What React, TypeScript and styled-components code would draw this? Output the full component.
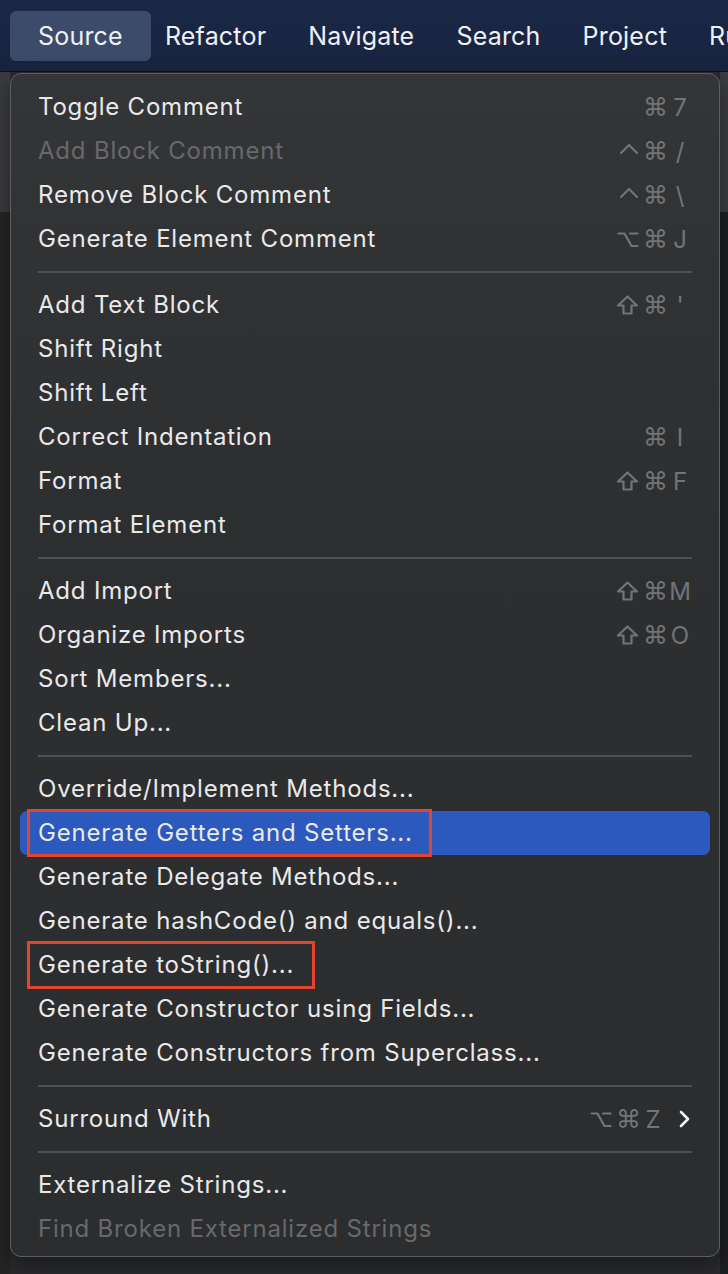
import { createGlobalStyle, styled } from "styled-components";

const GlobalStyle = createGlobalStyle`
  html, body {
    margin: 0;
    padding: 0;
    background: #1f2023;
  }
  body {
    font-family: Inter, "Noto Sans", sans-serif;
    -webkit-font-smoothing: antialiased;
  }
`;

const Page = styled.div`
  width: 728px;
  height: 1274px;
  display: flex;
  flex-direction: column;
  overflow: hidden;
`;

const MenuBar = styled.div`
  height: 72px;
  flex: none;
  display: flex;
  align-items: center;
  padding-left: 17px;
  background: linear-gradient(#1a2746, #19243f);
  border-bottom: 1px solid #0d1322;
  box-sizing: border-box;
  white-space: nowrap;
  overflow: hidden;
`;

const MenuTitle = styled.div<{ $active?: boolean }>`
  height: 50px;
  display: flex;
  align-items: center;
  padding: 0 ${(p) => (p.$active ? "28px" : "21px")};
  margin: 0 ${(p) => (p.$active ? "-7px" : "0")};
  border-radius: 6px;
  background: ${(p) => (p.$active ? "#3c4b69" : "transparent")};
  color: #eef1f6;
  font-size: 25px;
  letter-spacing: 0.2px;
`;

const Workspace = styled.div`
  flex: 1;
  position: relative;
  display: grid;
  grid-template-columns: 10px 1fr 8px;
`;

const SideStrip = styled.div<{ $top: string; $bottom: string; $split: number }>`
  background: linear-gradient(
    ${(p) => p.$top} 0,
    ${(p) => p.$top} ${(p) => p.$split}px,
    ${(p) => p.$bottom} ${(p) => p.$split}px
  );
`;

const Middle = styled.div`
  background: #2a2b2d;
`;

const Dropdown = styled.div`
  position: absolute;
  left: 10px;
  top: 1px;
  width: 710px;
  box-sizing: border-box;
  padding: 11px 0 5px;
  border: 1px solid #5c5e61;
  border-radius: 11px;
  background: linear-gradient(#343537, #2d2e30 40%, #2c2d2f);
  box-shadow: 0 8px 24px rgba(0, 0, 0, 0.45);
`;

const Row = styled.div<{ $selected?: boolean; $disabled?: boolean }>`
  height: 44px;
  margin: 0 9px;
  padding: 0 18px;
  display: flex;
  align-items: center;
  border-radius: 7px;
  background: ${(p) => (p.$selected ? "#2c59bd" : "transparent")};
  color: ${(p) => (p.$disabled ? "#67696c" : "#e9e9ea")};
  font-size: 24px;
  letter-spacing: 0.8px;
`;

const Label = styled.span<{ $boxed?: number }>`
  flex: 1;
  display: flex;
  align-items: center;
  height: 44px;
  white-space: nowrap;

  & > span {
    position: relative;
    line-height: 44px;
  }

  & > span::after {
    content: "";
    display: ${(p) => (p.$boxed ? "block" : "none")};
    position: absolute;
    left: -11px;
    right: -${(p) => p.$boxed ?? 0}px;
    top: -2px;
    bottom: -2px;
    border: 3px solid #e3452c;
  }
`;

const Shortcut = styled.span`
  display: flex;
  align-items: center;
  color: #727477;
`;

const Mods = styled.span`
  display: flex;
  align-items: center;
  gap: 4px;
`;

const Cmd = styled.span`
  font-family: "DejaVu Sans", sans-serif;
  font-size: 25px;
  line-height: 1;
  letter-spacing: 0;
`;

const Key = styled.span`
  width: 24px;
  text-align: center;
  font-size: 24px;
  letter-spacing: 0;
`;

const Chevron = styled.svg`
  margin-left: 14px;
  margin-right: 2px;
`;

const Separator = styled.div`
  height: 22px;
  display: flex;
  align-items: center;
  margin: 0 27px;

  &::before {
    content: "";
    flex: 1;
    height: 2px;
    background: #4e5053;
  }
`;

const Glyph = ({ kind }: { kind: string }) => {
  if (kind === "⌘") return <Cmd>⌘</Cmd>;
  const common = {
    fill: "none",
    stroke: "#727477",
    strokeWidth: 2.2,
    strokeLinejoin: "round" as const,
    strokeLinecap: "round" as const,
  };
  if (kind === "⇧")
    return (
      <svg width="23" height="20" viewBox="0 0 23 20">
        <path d="M11.5 1.5 L21 10.5 H15.5 V18.5 H7.5 V10.5 H2 Z" {...common} />
      </svg>
    );
  if (kind === "^")
    return (
      <svg width="20" height="20" viewBox="0 0 20 20">
        <path d="M2 12 L10 4 L18 12" {...common} />
      </svg>
    );
  return (
    <svg width="22" height="20" viewBox="0 0 22 20">
      <path d="M1.5 4.5 H7.5 L14.5 17 H20.5 M13 4.5 H20.5" {...common} />
    </svg>
  );
};

type Item =
  | { sep: true }
  | {
      sep?: false;
      label: string;
      mods?: string[];
      keyName?: string;
      disabled?: boolean;
      selected?: boolean;
      boxed?: number;
      submenu?: boolean;
    };

const items: Item[] = [
  { label: "Toggle Comment", mods: ["⌘"], keyName: "7" },
  { label: "Add Block Comment", mods: ["^", "⌘"], keyName: "/", disabled: true },
  { label: "Remove Block Comment", mods: ["^", "⌘"], keyName: "\\" },
  { label: "Generate Element Comment", mods: ["⌥", "⌘"], keyName: "J" },
  { sep: true },
  { label: "Add Text Block", mods: ["⇧", "⌘"], keyName: "'" },
  { label: "Shift Right" },
  { label: "Shift Left" },
  { label: "Correct Indentation", mods: ["⌘"], keyName: "I" },
  { label: "Format", mods: ["⇧", "⌘"], keyName: "F" },
  { label: "Format Element" },
  { sep: true },
  { label: "Add Import", mods: ["⇧", "⌘"], keyName: "M" },
  { label: "Organize Imports", mods: ["⇧", "⌘"], keyName: "O" },
  { label: "Sort Members..." },
  { label: "Clean Up..." },
  { sep: true },
  { label: "Override/Implement Methods..." },
  { label: "Generate Getters and Setters...", selected: true, boxed: 19 },
  { label: "Generate Delegate Methods..." },
  { label: "Generate hashCode() and equals()..." },
  { label: "Generate toString()...", boxed: 21 },
  { label: "Generate Constructor using Fields..." },
  { label: "Generate Constructors from Superclass..." },
  { sep: true },
  { label: "Surround With", mods: ["⌥", "⌘"], keyName: "Z", submenu: true },
  { sep: true },
  { label: "Externalize Strings..." },
  { label: "Find Broken Externalized Strings", disabled: true },
];

const titles = ["Source", "Refactor", "Navigate", "Search", "Project", "Run"];

export default function App() {
  return (
    <Page>
      <GlobalStyle />
      <MenuBar>
        {titles.map((t, i) => (
          <MenuTitle key={t} $active={i === 0}>
            {t}
          </MenuTitle>
        ))}
      </MenuBar>
      <Workspace>
        <SideStrip $top="#3b3c3e" $bottom="#252526" $split={140} />
        <Middle />
        <SideStrip $top="#3d3e40" $bottom="#1e1f22" $split={140} />
        <Dropdown>
          {items.map((it, i) =>
            it.sep ? (
              <Separator key={i} />
            ) : (
              <Row key={i} $selected={it.selected} $disabled={it.disabled}>
                <Label $boxed={it.boxed}>
                  <span>{it.label}</span>
                </Label>
                {it.mods && (
                  <Shortcut>
                    <Mods>
                      {it.mods.map((m) => (
                        <Glyph key={m} kind={m} />
                      ))}
                    </Mods>
                    <Key>{it.keyName}</Key>
                  </Shortcut>
                )}
                {it.submenu && (
                  <Chevron width="11" height="18" viewBox="0 0 11 18">
                    <polyline
                      points="2,2 9,9 2,16"
                      fill="none"
                      stroke="#f2f2f2"
                      strokeWidth="2.6"
                      strokeLinecap="round"
                      strokeLinejoin="round"
                    />
                  </Chevron>
                )}
              </Row>
            )
          )}
        </Dropdown>
      </Workspace>
    </Page>
  );
}
